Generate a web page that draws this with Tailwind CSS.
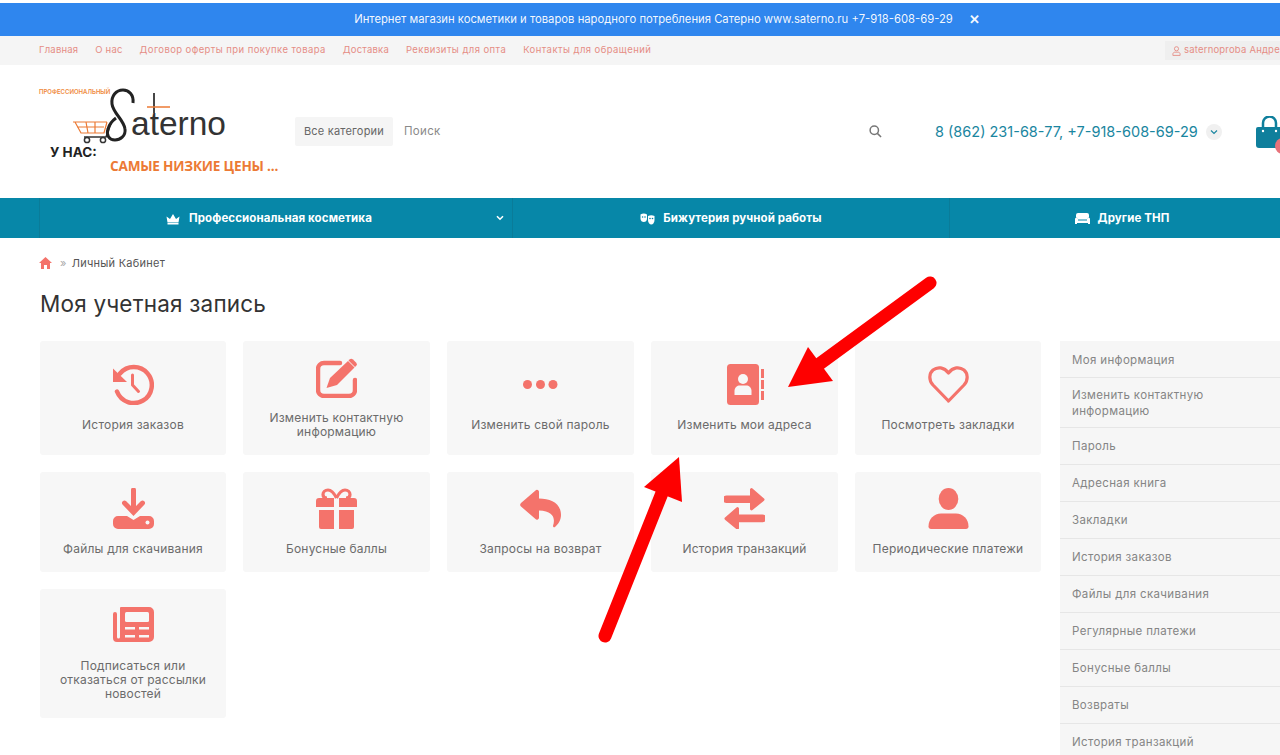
<!DOCTYPE html>
<html lang="en" class="overflow-hidden">
<head>
    <meta charset="UTF-8">
    <meta name="viewport" content="width=device-width, initial-scale=1.0">
    <script src="https://cdn.jsdelivr.net/npm/@tailwindcss/browser@4"></script>
    <title>Моя учетная запись</title>
</head>
<body class="overflow-hidden bg-white font-['Inter','Noto_Sans',sans-serif]">
<div class="relative w-[1320px] h-[755px] overflow-hidden pt-[3px]">

    <!-- Banner -->
    <div class="h-[33px] bg-[#2f86ee] flex items-center justify-center pl-[14px] text-[11.27px] text-white/95">
        <span>Интернет магазин косметики и товаров народного потребления Сатерно www.saterno.ru +7-918-608-69-29</span>
        <span class="ml-[16px] font-bold text-[13px] leading-none">✕</span>
    </div>

    <!-- Top links -->
    <div class="h-[29px] bg-[#f5f5f5] flex items-center pl-[39px] text-[9.5px] text-[#e58d85] tracking-[0.2px]">
        <div class="flex gap-[17px] flex-1">
            <a>Главная</a>
            <a>О нас</a>
            <a class="tracking-[0.41px]">Договор оферты при покупке товара</a>
            <a class="tracking-[0.2px]">Доставка</a>
            <a class="tracking-[0.42px]">Реквизиты для опта</a>
            <a class="tracking-[0.43px]">Контакты для обращений</a>
        </div>
        <div class="w-[155px] h-[19px] bg-[#efefef] flex items-center pl-[7px] gap-[3px]">
            <svg class="w-[9px] h-[10px]" viewBox="0 0 10 11" fill="none" stroke="#e58d85" stroke-width="1"><circle cx="5" cy="3" r="2.3"/><path d="M1 10.4V9c0-1.4 1-2.2 2.2-2.2h3.6C8 6.800 9 7.600 9 9v1.400z"/></svg>
            <span>saternoproba Андрей</span>
        </div>
    </div>

    <!-- Header -->
    <div class="h-[133px] flex items-center">
        <!-- Logo -->
        <div class="relative w-[295px] h-[133px] shrink-0">
            <span class="absolute left-[39px] top-[24px] text-[6px] font-semibold text-[#ef8a3c] leading-none">ПРОФЕССИОНАЛЬНЫЙ</span>
            <span class="absolute left-[131px] top-[37px] font-['Liberation_Sans',sans-serif] text-[33.5px] leading-[44px] text-[#333]">aterno</span>
            <svg class="absolute left-[70px] top-[22px] w-[104px] h-[60px]" viewBox="0 0 104 60" fill="none">
                <path d="M3 35h34M7 40h27M5 35l6 11h23l3-11M16 35l2 11M25 35v11" stroke="#ec7a35" stroke-width="1.200"/>
                <path d="M42 34l-6 16H14" stroke="#333" stroke-width="1.600"/>
                <circle cx="17" cy="53" r="2.600" stroke="#333" stroke-width="1.500"/>
                <circle cx="33" cy="53" r="2.600" stroke="#333" stroke-width="1.500"/>
                <path d="M63 16c1-8-4-13-10-13-7 0-12 6-11 14 1 9 12 16 13 25 1 7-5 11-10 11-6 0-9-5-7-11 1-4 4-8 8-11" stroke="#222" stroke-width="3"/>
                <path d="M84 6v20" stroke="#333" stroke-width="1.800"/>
                <path d="M77 20h23" stroke="#ec7a35" stroke-width="1.500"/>
            </svg>
            <span class="absolute left-[50px] top-[79px] text-[13.5px] font-bold text-[#222] leading-[16px]">У НАС:</span>
            <span class="absolute left-[110px] top-[92px] font-['Open_Sans',sans-serif] text-[13.6px] font-bold text-[#ec7a35] leading-[18px] tracking-[-0.2px] whitespace-nowrap">САМЫЕ НИЗКИЕ ЦЕНЫ ...</span>
        </div>

        <!-- Search -->
        <div class="w-[98px] h-[29px] bg-[#f5f5f5] rounded-[2px] flex items-center justify-center text-[11px] text-[#666] tracking-[0.2px] shrink-0">Все категории</div>
        <span class="ml-[11px] w-[465px] text-[11.5px] text-[#8a8a8a] tracking-[0.3px] shrink-0">Поиск</span>
        <svg class="w-[13px] h-[13px] shrink-0" viewBox="0 0 14 14" fill="none" stroke="#777" stroke-width="1.600"><circle cx="5.700" cy="5.700" r="4.500"/><path d="M9 9l4 4"/></svg>

        <!-- Phone -->
        <span class="ml-[53px] w-[262px] text-[14.5px] text-[#1a86a0] whitespace-nowrap shrink-0">8 (862) 231-68-77, +7-918-608-69-29</span>
        <div class="ml-[9px] w-[16px] h-[16px] rounded-full bg-[#f0f0f0] flex items-center justify-center shrink-0">
            <svg class="w-[8px] h-[6px]" viewBox="0 0 8 6" fill="none" stroke="#1a86a0" stroke-width="1.200"><path d="M1 1.500l3 3 3-3"/></svg>
        </div>

        <!-- Cart -->
        <div class="relative ml-[33px] w-[30px] h-[32px] shrink-0">
            <svg class="w-[30px] h-[32px]" viewBox="0 0 30 32" fill="none">
                <path d="M8 12V7a6.500 6.500 0 0 1 13 0v5" stroke="#0f7f9c" stroke-width="2.500"/>
                <path d="M3 11h24a2 2 0 0 1 2 2v16a3 3 0 0 1-3 3H4a3 3 0 0 1-3-3V13a2 2 0 0 1 2-2z" fill="#0f7f9c"/>
                <circle cx="8" cy="15" r="1.200" fill="#fff"/><circle cx="21" cy="15" r="1.200" fill="#fff"/>
            </svg>
            <span class="absolute left-[20px] top-[22px] w-[16px] h-[16px] rounded-full bg-[#e8727a]"></span>
        </div>
    </div>

    <!-- Main menu -->
    <div class="h-[40px] bg-[#0787a8] flex text-white text-[11.5px] font-bold tracking-[0.1px]">
        <div class="relative ml-[39px] w-[474px] border-x border-[#0a7c99] flex items-center justify-center gap-[9px] pr-[14px] pt-[1px]">
            <svg class="w-[14px] h-[12px]" viewBox="0 0 14 11" fill="#fff"><path d="M.5 3l3.500 2.500L7 .5l3 5L13.500 3l-1 6h-11zM1.500 9.500h11V11h-11z"/></svg>
            <span>Профессиональная косметика</span>
            <svg class="absolute right-[8px] top-[17px] w-[8px] h-[6px]" viewBox="0 0 8 6" fill="none" stroke="#fff" stroke-width="1.600"><path d="M1 1.200l3 3 3-3"/></svg>
        </div>
        <div class="w-[437px] border-r border-[#0a7c99] flex items-center justify-center gap-[8px] pt-[1px]">
            <svg class="w-[15px] h-[12px]" viewBox="0 0 15 12" fill="#fff"><path d="M.5 1.500C2.500.300 5 .300 7 1.500v4C7 8 5.500 9 3.800 9S.5 8 .5 5.500z"/><path d="M8 3c2-1 4.500-1 6.500 0v4c0 2.500-1.500 4.500-3.200 4.500S8 9.500 8 7z"/><circle cx="2.600" cy="4" r=".8" fill="#0787a8"/><circle cx="5" cy="4" r=".8" fill="#0787a8"/><circle cx="10" cy="5.500" r=".8" fill="#0787a8"/><circle cx="12.500" cy="5.500" r=".8" fill="#0787a8"/></svg>
            <span>Бижутерия ручной работы</span>
        </div>
        <div class="w-[344px] flex items-center justify-center gap-[8px] pt-[1px]">
            <svg class="w-[15px] h-[11px]" viewBox="0 0 15 11" fill="#fff"><path d="M3 0h9a2 2 0 0 1 2 2v2.500a2 2 0 0 0-2 2H3a2 2 0 0 0-2-2V2a2 2 0 0 1 2-2z"/><path d="M0 6a1.500 1.500 0 0 1 3 0v1.500h9V6a1.500 1.500 0 0 1 3 0v5h-2v-1H2v1H0z"/></svg>
            <span>Другие ТНП</span>
        </div>
    </div>

    <!-- Breadcrumb -->
    <div class="h-[50px] pl-[39px] flex items-center text-[11px] text-[#555] tracking-[0.25px]">
        <svg class="w-[13px] h-[12px]" viewBox="0 0 13 12" fill="#f4736b"><path d="M6.500 0L13 6h-2v6H8V8H5v4H2V6H0z"/></svg>
        <span class="ml-[8px] text-[#aaa]">»</span>
        <span class="ml-[5px]">Личный Кабинет</span>
    </div>

    <h1 class="h-[53px] pl-[40px] pt-[2px] text-[22.5px] leading-[28px] font-normal text-[#333] tracking-[0.2px]">Моя учетная запись</h1>

    <!-- Content -->
    <div class="flex items-start pl-[40px]">
        <div class="grid grid-cols-[186px_187px_187px_187px_186px] grid-rows-[114px_100px_129px] gap-[17px] w-[1001px] shrink-0 text-[12px] leading-[14px] text-[#6b6b6b] text-center tracking-[0.2px]">

            <a class="bg-[#f7f7f7] rounded-[3px] flex flex-col items-center justify-center gap-[13px] px-[12px] pb-[1px]">
                <svg class="w-[41px] h-[41px]" viewBox="0 0 41 41" fill="none">
                    <path d="M7 9.500A18 18 0 1 1 4 27.500" stroke="#f4736b" stroke-width="4.500" stroke-linecap="round"/>
                    <path d="M0 4.500l14 13.500H0z" fill="#f4736b"/>
                    <path d="M19.500 11v10l6 6.500" stroke="#f4736b" stroke-width="3" stroke-linecap="round" stroke-linejoin="round"/>
                </svg>
                <span>История заказов</span>
            </a>

            <a class="bg-[#f7f7f7] rounded-[3px] flex flex-col items-center justify-center gap-[13px] px-[12px] pb-[1px]">
                <svg class="w-[41px] h-[41px]" viewBox="0 0 41 41" fill="none">
                    <path d="M24 6H8a6 6 0 0 0-6 6v21a6 6 0 0 0 6 6h25a6 6 0 0 0 6-6V23" stroke="#f4736b" stroke-width="4.500" stroke-linecap="round"/>
                    <path d="M32 4l6.500 6.500L21 28l-10.500 3 3.500-10z" fill="#f4736b"/>
                    <path d="M33.500 2.500a2.500 2.500 0 0 1 3.500 0l3 3a2.500 2.500 0 0 1 0 3.500l-1 1-6.500-6.500z" fill="#f4736b"/>
                </svg>
                <span>Изменить контактную информацию</span>
            </a>

            <a class="bg-[#f7f7f7] rounded-[3px] flex flex-col items-center justify-center gap-[13px] px-[12px] pb-[1px]">
                <svg class="w-[41px] h-[41px]" viewBox="0 0 41 41" fill="#f4736b">
                    <circle cx="7.500" cy="20.500" r="4.500"/><circle cx="20.500" cy="20.500" r="4.500"/><circle cx="33" cy="20.500" r="4.500"/>
                </svg>
                <span>Изменить свой пароль</span>
            </a>

            <a class="bg-[#f7f7f7] rounded-[3px] flex flex-col items-center justify-center gap-[13px] px-[12px] pb-[1px]">
                <svg class="w-[41px] h-[41px]" viewBox="0 0 41 41">
                    <rect x="3" y="0" width="32" height="41" rx="3.500" fill="#f4736b"/>
                    <path d="M37 5h3v9h-3zM37 16h3v9h-3zM37 27h3v9h-3z" fill="#f4736b"/>
                    <circle cx="19" cy="15" r="5" fill="#f7f7f7"/>
                    <path d="M10.500 31v-4c0-3.500 2.500-5.500 5.500-5.500h6c3 0 5.500 2 5.500 5.500v4z" fill="#f7f7f7"/>
                </svg>
                <span>Изменить мои адреса</span>
            </a>

            <a class="bg-[#f7f7f7] rounded-[3px] flex flex-col items-center justify-center gap-[13px] px-[12px] pb-[1px]">
                <svg class="w-[41px] h-[41px]" viewBox="0 0 41 41" fill="none">
                    <path d="M20.500 37L5 21C.500 16 1 9.500 5 6c4.500-3.500 11-3 15.500 3C25 3 31.500 2.500 36 6c4 3.500 4.500 10 0 15z" stroke="#f4736b" stroke-width="3.200" stroke-linejoin="round"/>
                </svg>
                <span>Посмотреть закладки</span>
            </a>

            <a class="bg-[#f7f7f7] rounded-[3px] flex flex-col items-center justify-center gap-[13px] px-[12px] pb-[1px]">
                <svg class="w-[41px] h-[41px]" viewBox="0 0 41 41" fill="#f4736b">
                    <path d="M18 2a2.500 2.500 0 0 1 5 0v16l5-5a2.500 2.500 0 0 1 3.500 3.500L20.500 28 9.500 16.500A2.500 2.500 0 0 1 13 13l5 5z"/>
                    <path d="M5 28h9l6.500 4 6.500-4h9a5 5 0 0 1 5 5v3a5 5 0 0 1-5 5H5a5 5 0 0 1-5-5v-3a5 5 0 0 1 5-5z"/>
                    <circle cx="34.500" cy="34.500" r="2" fill="#f7f7f7"/>
                </svg>
                <span>Файлы для скачивания</span>
            </a>

            <a class="bg-[#f7f7f7] rounded-[3px] flex flex-col items-center justify-center gap-[13px] px-[12px] pb-[1px]">
                <svg class="w-[41px] h-[41px]" viewBox="0 0 41 41">
                    <path d="M3 10h15v9H0v-6a3 3 0 0 1 3-3zM23 10h15a3 3 0 0 1 3 3v6H23zM3 22h15v19H5a2 2 0 0 1-2-2zM23 22h15v17a2 2 0 0 1-2 2H23z" fill="#f4736b"/>
                    <path d="M20.500 10c-2-4-5-8-8.500-8-3 0-5 2-5 4.500S9 10 11 10M20.500 10c2-4 5-8 8.500-8 3 0 5 2 5 4.500S32 10 30 10" fill="none" stroke="#f4736b" stroke-width="3.200"/>
                </svg>
                <span>Бонусные баллы</span>
            </a>

            <a class="bg-[#f7f7f7] rounded-[3px] flex flex-col items-center justify-center gap-[13px] px-[12px] pb-[1px]">
                <svg class="w-[41px] h-[41px]" viewBox="0 0 41 41" fill="#f4736b">
                    <path d="M15.500 2.500a2 2 0 0 1 3.500 1.500v6.500c12 0 22 5 22 16.500 0 5-2.500 9-6 12-1 .800-2.300-.200-1.900-1.400 2.400-8-.100-14.500-14.100-15.100v7a2 2 0 0 1-3.500 1.500L1 18.500a2.500 2.500 0 0 1 0-3.500z"/>
                </svg>
                <span>Запросы на возврат</span>
            </a>

            <a class="bg-[#f7f7f7] rounded-[3px] flex flex-col items-center justify-center gap-[13px] px-[12px] pb-[1px]">
                <svg class="w-[41px] h-[41px]" viewBox="0 0 41 41" fill="#f4736b">
                    <path d="M2.500 7.500H26V1.500a1.500 1.500 0 0 1 2.500-1l11.500 10a1.500 1.500 0 0 1 0 2.200L28.500 22a1.500 1.500 0 0 1-2.500-1v-6H2.500a3 3 0 0 1 0-7.500z"/>
                    <path d="M38.500 26.500H15v-6a1.500 1.500 0 0 0-2.500-1L1 29.500a1.500 1.500 0 0 0 0 2.200l11.500 9.500a1.500 1.500 0 0 0 2.500-1v-6h23.500a3 3 0 0 0 0-7.700z"/>
                </svg>
                <span>История транзакций</span>
            </a>

            <a class="bg-[#f7f7f7] rounded-[3px] flex flex-col items-center justify-center gap-[13px] px-[12px] pb-[1px]">
                <svg class="w-[41px] h-[41px]" viewBox="0 0 41 41" fill="#f4736b">
                    <ellipse cx="20.500" cy="11" rx="9.800" ry="11"/>
                    <path d="M3 41c-1.500 0-2.500-1-2.500-2.500C.5 31 6 25.500 13 25.500h15c7 0 12.500 5.500 12.500 13 0 1.500-1 2.500-2.500 2.500z"/>
                </svg>
                <span>Периодические платежи</span>
            </a>

            <a class="bg-[#f7f7f7] rounded-[3px] flex flex-col items-center justify-center gap-[13px] px-[12px] pb-[1px]">
                <svg class="w-[41px] h-[41px]" viewBox="0 0 41 41">
                    <path d="M8 2h28a5 5 0 0 1 5 5v25a5 5 0 0 1-5 5H4a4 4 0 0 1-4-4V9a2 2 0 0 1 4 0v23a1.500 1.500 0 0 0 3 0V3a1 1 0 0 1 1-1z" fill="#f4736b"/>
                    <rect x="12" y="7" width="24" height="10" rx="1.500" fill="#f7f7f7"/>
                    <path d="M12 22h10v2.500H12zM26 22h10v2.500H26zM12 30h10v2.500H12zM26 30h10v2.500H26z" fill="#f7f7f7"/>
                </svg>
                <span>Подписаться или отказаться от рассылки новостей</span>
            </a>
        </div>

        <!-- Side list -->
        <div class="ml-[19px] w-[260px] shrink-0 bg-[#f6f6f6] pt-[1px] text-[11.5px] leading-[16px] text-[#858585] tracking-[0.35px]">
            <a class="h-[36px] flex items-center px-[12px] border-b border-[#e6e6e6]">Моя информация</a>
            <a class="h-[50px] flex items-center px-[12px] border-b border-[#e6e6e6] w-full"><span class="w-[150px]">Изменить контактную информацию</span></a>
            <a class="h-[37px] flex items-center px-[12px] border-b border-[#e6e6e6]">Пароль</a>
            <a class="h-[37px] flex items-center px-[12px] border-b border-[#e6e6e6]">Адресная книга</a>
            <a class="h-[37px] flex items-center px-[12px] border-b border-[#e6e6e6]">Закладки</a>
            <a class="h-[37px] flex items-center px-[12px] border-b border-[#e6e6e6]">История заказов</a>
            <a class="h-[37px] flex items-center px-[12px] border-b border-[#e6e6e6]">Файлы для скачивания</a>
            <a class="h-[37px] flex items-center px-[12px] border-b border-[#e6e6e6]">Регулярные платежи</a>
            <a class="h-[37px] flex items-center px-[12px] border-b border-[#e6e6e6]">Бонусные баллы</a>
            <a class="h-[37px] flex items-center px-[12px] border-b border-[#e6e6e6]">Возвраты</a>
            <a class="h-[36px] flex items-center px-[12px]">История транзакций</a>
        </div>
    </div>

    <!-- Red arrows drawn over the screenshot -->
    <svg class="absolute left-0 top-0 w-[1280px] h-[755px] pointer-events-none" viewBox="0 0 1280 755" fill="none">
        <path d="M930 283L818 365" stroke="#fe0000" stroke-width="13" stroke-linecap="round"/>
        <path d="M788 387L808 347L833 381z" fill="#fe0000"/>
        <path d="M605 636L664 488" stroke="#fe0000" stroke-width="13" stroke-linecap="round"/>
        <path d="M679 457L644 487L682 502z" fill="#fe0000"/>
    </svg>
</div>
</body>
</html>
